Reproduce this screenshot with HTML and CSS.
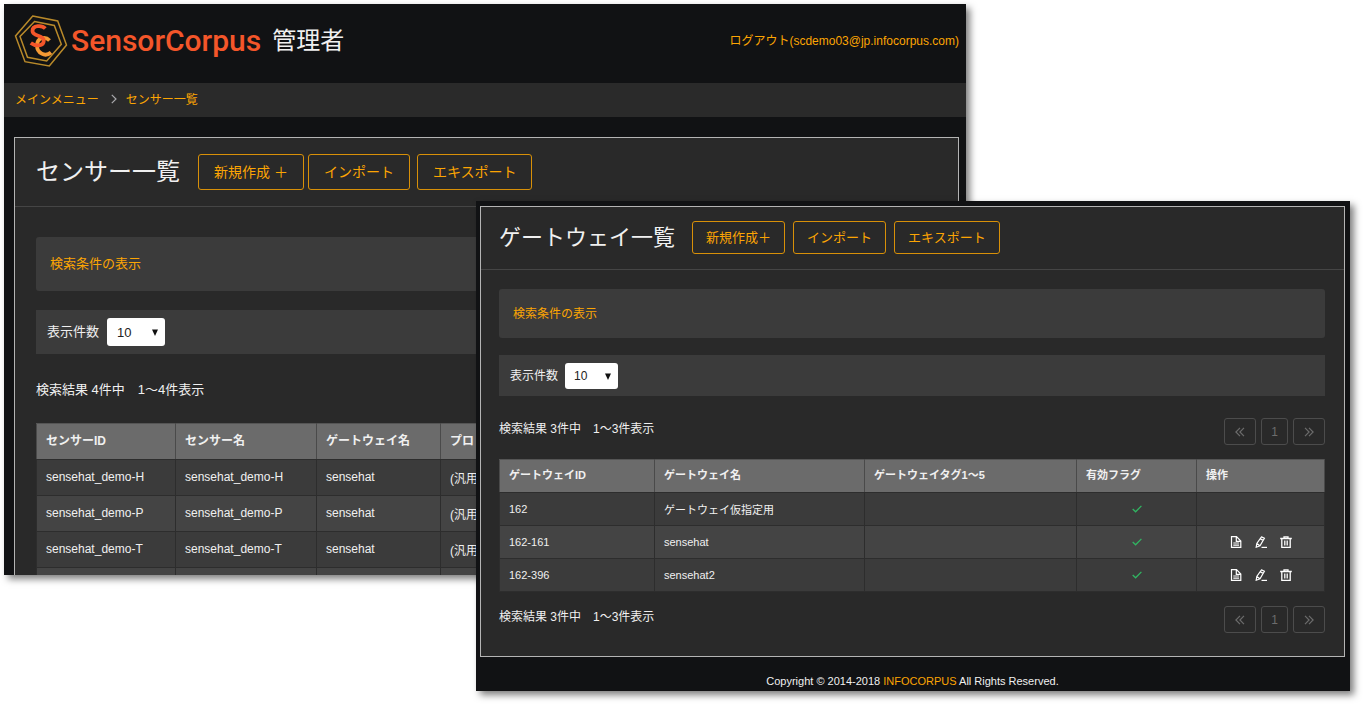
FILE: index.html
```html
<!DOCTYPE html>
<html lang="ja">
<head>
<meta charset="utf-8">
<title>SensorCorpus 管理者</title>
<link rel="stylesheet" href="styles.css">
</head>
<body>
<svg class="defs" aria-hidden="true">
  <symbol id="i-doc" viewBox="0 0 12 12"><path d="M1.500.7H6.500L10.800 5v6.300H1.500z M6.300 1v4.300H11 M3.300 7h5.800 M3.300 9.200h5.800" fill="none" stroke="currentColor" stroke-width="1.2"/></symbol>
  <symbol id="i-edit" viewBox="0 0 12 12"><path d="M6.400.9 9.400 2.300 5 9.800 1.200 11.200 1.800 7.500z M5.400 2.900l2.800 1.500 M1.800 7.500 5 9.800" fill="none" stroke="currentColor" stroke-width="1.2"/><path d="M6.500 11.400h5.500" stroke="currentColor" stroke-width="1.2"/></symbol>
  <symbol id="i-trash" viewBox="0 0 12 12"><path d="M.2 2.500h11.600 M4 2.400V.8h4v1.600 M1.800 2.800v8.500h8.400V2.800 M4.800 4.600v5 M7.200 4.600v5" fill="none" stroke="currentColor" stroke-width="1.3"/></symbol>
  <symbol id="i-check" viewBox="0 0 10 8"><path d="M.7 4 3.600 6.800 9.400.9" fill="none" stroke="currentColor" stroke-width="1.3"/></symbol>
  <symbol id="i-first" viewBox="0 0 10 10"><path d="M5 .8.9 5 5 9.200 M9 .8 4.900 5 9 9.200" fill="none" stroke="currentColor" stroke-width="1.2"/></symbol>
  <symbol id="i-last" viewBox="0 0 10 10"><path d="M1 .8 5.100 5 1 9.200 M5 .8 9.100 5 5 9.200" fill="none" stroke="currentColor" stroke-width="1.2"/></symbol>
  <symbol id="i-caret" viewBox="0 0 6 7"><path d="M0 .5h6L3 7z" fill="currentColor"/></symbol>
</svg>

<main class="stage">
  <section class="window window-back">
    <header class="topbar">
      <svg class="logo" viewBox="0 0 54 54" aria-hidden="true">
        <g fill="none" stroke="#b98a2a" stroke-width="1.500">
          <path d="M18.700 2 43.700 7 52.500 31 35.300 52 11 47.700 1.500 22z"/>
          <path d="M20.500 7.500 40.300 11.500 47.300 30.300 32.700 47 13.500 43.300 6 22.500z"/>
        </g>
        <path d="M35.500 26.500C31 21.500 23 24 23 31.500S31 43.500 37 38.500" fill="none" stroke="#f59a34" stroke-width="3.800"/>
        <path d="M31.300 14.500C28 11 18.500 11 18.500 17C18.500 23 29.800 20.500 29.800 26.500C29.800 32.500 21.500 32.500 16.800 29" fill="none" stroke="#f4562a" stroke-width="3.800"/>
      </svg>
      <span class="brand">SensorCorpus</span>
      <h1 class="role">管理者</h1>
      <a class="link logout" href="#">ログアウト(scdemo03@jp.infocorpus.com)</a>
    </header>
    <nav class="crumbs">
      <a class="link" href="#">メインメニュー</a>
      <svg class="crumb-sep" viewBox="0 0 6 10" aria-hidden="true"><path d="M.8.8 5 5 .8 9.200" fill="none" stroke="currentColor" stroke-width="1.200"/></svg>
      <a class="link" href="#">センサー一覧</a>
    </nav>
    <div class="panel">
      <div class="panel-head">
        <h2 class="title">センサー一覧</h2>
        <button class="btn" type="button">新規作成 ＋</button>
        <button class="btn" type="button">インポート</button>
        <button class="btn btn-last" type="button">エキスポート</button>
      </div>
      <div class="panel-body">
        <div class="filter"><a class="link" href="#">検索条件の表示</a></div>
        <div class="paging-size">
          <label for="size-a">表示件数</label>
          <span class="select"><select id="size-a"><option>10</option></select><svg class="caret" aria-hidden="true"><use href="#i-caret"/></svg></span>
        </div>
        <p class="result">検索結果 4件中　1〜4件表示</p>
        <table class="grid">
          <colgroup><col class="s-id"><col class="s-name"><col class="s-gw"><col></colgroup>
          <thead><tr><th>センサーID</th><th>センサー名</th><th>ゲートウェイ名</th><th>プロト</th></tr></thead>
          <tbody>
            <tr><td>sensehat_demo-H</td><td>sensehat_demo-H</td><td>sensehat</td><td>(汎用</td></tr>
            <tr><td>sensehat_demo-P</td><td>sensehat_demo-P</td><td>sensehat</td><td>(汎用</td></tr>
            <tr><td>sensehat_demo-T</td><td>sensehat_demo-T</td><td>sensehat</td><td>(汎用</td></tr>
            <tr><td></td><td></td><td></td><td></td></tr>
          </tbody>
        </table>
      </div>
    </div>
  </section>

  <section class="window window-front">
    <div class="panel">
      <div class="panel-head">
        <h2 class="title">ゲートウェイ一覧</h2>
        <button class="btn" type="button">新規作成＋</button>
        <button class="btn" type="button">インポート</button>
        <button class="btn" type="button">エキスポート</button>
      </div>
      <div class="panel-body">
        <div class="filter"><a class="link" href="#">検索条件の表示</a></div>
        <div class="paging-size">
          <label for="size-b">表示件数</label>
          <span class="select"><select id="size-b"><option>10</option></select><svg class="caret" aria-hidden="true"><use href="#i-caret"/></svg></span>
        </div>
        <div class="result-row">
          <p class="result">検索結果 3件中　1〜3件表示</p>
          <div class="pager">
            <button type="button" aria-label="最初"><svg><use href="#i-first"/></svg></button>
            <button class="page" type="button">1</button>
            <button type="button" aria-label="最後"><svg><use href="#i-last"/></svg></button>
          </div>
        </div>
        <table class="grid">
          <colgroup><col class="g-id"><col class="g-name"><col class="g-tag"><col class="g-flag"><col></colgroup>
          <thead><tr><th>ゲートウェイID</th><th>ゲートウェイ名</th><th>ゲートウェイタグ1〜5</th><th>有効フラグ</th><th>操作</th></tr></thead>
          <tbody>
            <tr><td>162</td><td>ゲートウェイ仮指定用</td><td></td><td><svg class="check"><use href="#i-check"/></svg></td><td></td></tr>
            <tr><td>162-161</td><td>sensehat</td><td></td><td><svg class="check"><use href="#i-check"/></svg></td>
              <td><div class="ops"><button type="button" aria-label="詳細"><svg><use href="#i-doc"/></svg></button><button type="button" aria-label="編集"><svg><use href="#i-edit"/></svg></button><button type="button" aria-label="削除"><svg><use href="#i-trash"/></svg></button></div></td></tr>
            <tr><td>162-396</td><td>sensehat2</td><td></td><td><svg class="check"><use href="#i-check"/></svg></td>
              <td><div class="ops"><button type="button" aria-label="詳細"><svg><use href="#i-doc"/></svg></button><button type="button" aria-label="編集"><svg><use href="#i-edit"/></svg></button><button type="button" aria-label="削除"><svg><use href="#i-trash"/></svg></button></div></td></tr>
          </tbody>
        </table>
        <div class="result-row result-row-end">
          <p class="result">検索結果 3件中　1〜3件表示</p>
          <div class="pager">
            <button type="button" aria-label="最初"><svg><use href="#i-first"/></svg></button>
            <button class="page" type="button">1</button>
            <button type="button" aria-label="最後"><svg><use href="#i-last"/></svg></button>
          </div>
        </div>
      </div>
    </div>
    <footer class="footer">Copyright © 2014-2018 <a class="link" href="#">INFOCORPUS</a> All Rights Reserved.</footer>
  </section>
</main>
</body>
</html>
```

FILE: styles.css
```css
*, *::before, *::after { box-sizing: border-box; }

body {
  margin: 0;
  background: #fff;
  color: #f0f0f0;
  font-family: "Liberation Sans", "Noto Sans CJK JP", sans-serif;
  font-size: 12px;
}

h1, h2, p { margin: 0; font-weight: 400; }
button, select { font-family: inherit; }
.defs { position: absolute; width: 0; height: 0; }
.link { color: #fca503; text-decoration: none; }

.stage { position: relative; height: 100vh; overflow: hidden; padding: 4px; }

.window { background: #111214; }
.window-back {
  width: calc(100% - 393px);
  height: calc(100vh - 133px);
  overflow: hidden;
  box-shadow: 4px 4px 7px rgba(0, 0, 0, .5);
}
.window-front {
  position: absolute;
  top: 201px;
  left: 476px;
  right: 13px;
  padding: 5px 5px 0 4px;
  box-shadow: 4px 4px 7px rgba(0, 0, 0, .5);
}

/* Header and breadcrumbs */
.topbar { display: flex; align-items: center; height: 79px; padding: 0 7px 5px 10px; }
.logo { width: 54px; height: 54px; }
.brand { margin: 0 11px 0 3px; color: #f4562a; font: 500 30px/34px Roboto, sans-serif; }
.role { font-size: 24px; line-height: 36px; }
.logout { margin-left: auto; padding-bottom: 4px; }
.crumbs {
  display: flex;
  align-items: center;
  height: 34px;
  padding: 0 11px 3px;
  background: #2a2a2a;
}
.crumb-sep { width: 6px; height: 10px; margin: 0 9px 0 12px; color: #a9a9ad; }

/* Panels */
.panel { border: 1px solid #b4b4b4; background: #292929; }
.window-back .panel { margin: 20px 7px 0 10px; }
.panel-head { display: flex; align-items: center; border-bottom: 1px solid #454545; }
.window-back .panel-head { height: 69px; padding: 0 20px 0 21px; }
.window-front .panel-head { height: 63px; padding: 0 18px 1px; gap: 8px; }
.window-back .title { margin-right: 18px; font-size: 24px; line-height: 36px; }
.window-front .title { margin-right: 9px; font-size: 22px; line-height: 32px; }
.btn {
  border: 1px solid #d89008;
  border-radius: 3px;
  background: transparent;
  color: #fca503;
  white-space: nowrap;
}
.window-back .btn { height: 36px; margin-right: 4px; padding: 0 15px 3px; font-size: 14px; }
.window-back .btn-last { margin-left: 3px; }
.window-front .btn { height: 33px; padding: 0 13px 3px; font-size: 13px; }

.window-back .panel-body { padding: 30px 17px 0 21px; font-size: 13px; }
.window-front .panel-body { padding: 19px 19px 23px 18px; }
.filter { display: flex; align-items: center; border-radius: 3px; background: #3b3b3b; }
.window-back .filter { height: 54px; padding: 0 14px 3px; margin-bottom: 19px; }
.window-front .filter { height: 49px; padding: 0 14px 3px; margin-bottom: 17px; }
.paging-size { display: flex; align-items: center; background: #3b3b3b; }
.paging-size label { padding-bottom: 3px; }
.window-back .paging-size { height: 44px; padding: 0 11px; gap: 8px; }
.window-front .paging-size { height: 41px; padding: 0 11px; gap: 7px; }
.select { position: relative; display: flex; }
.select select {
  appearance: none;
  border: 0;
  border-radius: 3px;
  background: #fff;
  color: #222;
}
.window-back select { width: 58px; height: 28px; padding: 0 10px; font-size: 13px; }
.window-front select { width: 53px; height: 26px; padding: 0 9px; font-size: 12px; }
.caret {
  position: absolute;
  top: calc(50% - 3px);
  right: 7px;
  width: 6px;
  height: 7px;
  color: #111;
  pointer-events: none;
}
.window-back .result { margin: 26px 0 23px; line-height: 20px; }

.result-row { display: flex; align-items: flex-start; justify-content: space-between; padding: 22px 0 14px; }
.result-row .result { line-height: 22px; }
.result-row-end { padding: 14px 0 0; }
.pager { display: flex; gap: 5px; }
.pager button {
  display: flex;
  align-items: center;
  justify-content: center;
  width: 32px;
  height: 27px;
  padding: 0;
  border: 1px solid #4c4c4c;
  border-radius: 3px;
  background: transparent;
  color: #6c6c6c;
  font-size: 12px;
}
.pager .page { width: 27px; }
.pager svg { width: 10px; height: 10px; }

/* Tables */
.grid { width: 100%; border-collapse: collapse; table-layout: fixed; }
.grid th, .grid td {
  padding: 0 9px 1px;
  border: 1px solid #2d2d2d;
  text-align: left;
  white-space: nowrap;
  overflow: hidden;
}
.grid th { padding-bottom: 4px; border-color: #555 #4a4a4a #2d2d2d; background: #6b6b6b; font-weight: 700; }
.grid td { background: #3b3b3b; }
.grid tr:nth-child(even) td { background: #444; }
.window-back .grid { font-size: 12px; }
.window-back .grid tr { height: 36px; }
.window-front .grid { font-size: 11px; }
.window-front .grid tr { height: 33px; }
.s-id { width: 139px; }
.s-name { width: 141px; }
.s-gw { width: 124px; }
.g-id { width: 155px; }
.g-name { width: 210px; }
.g-tag { width: 212px; }
.g-flag { width: 120px; }
.check { display: block; width: 10px; height: 8px; margin: 0 auto; color: #31b562; }
.ops { display: flex; justify-content: center; gap: 13px; }
.ops button { display: flex; padding: 0; border: 0; background: transparent; color: #fff; }
.ops svg { width: 12px; height: 12px; }

.footer { padding: 14px 0 0; height: 34px; font-size: 11px; line-height: 20px; text-align: center; }
```
